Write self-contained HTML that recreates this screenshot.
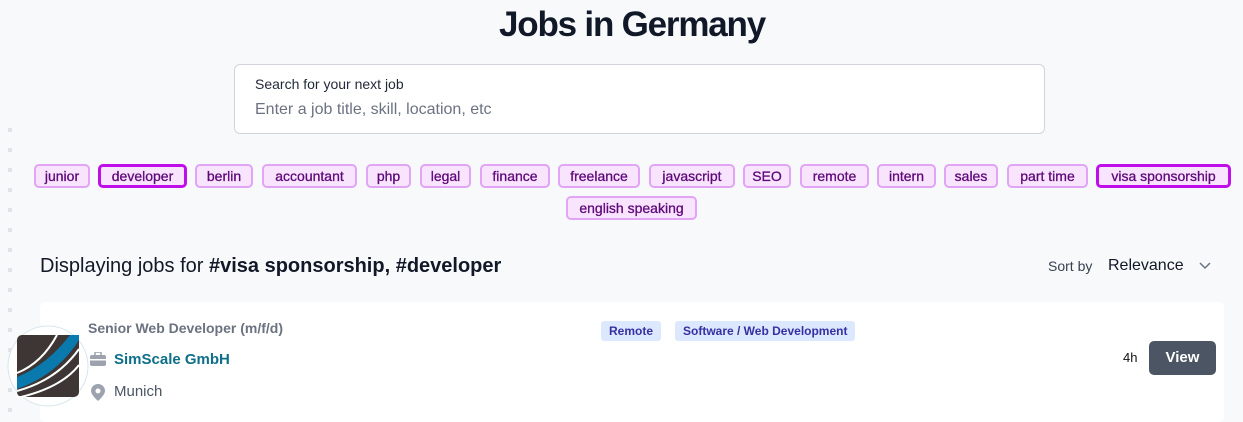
<!DOCTYPE html>
<html><head><meta charset="utf-8"><style>
*{margin:0;padding:0;box-sizing:border-box}
body{width:1243px;height:413px;overflow:hidden;background:#f8f9fb;font-family:"Liberation Sans",Arial,sans-serif;position:relative}
.a{position:absolute}
h1{position:absolute;left:0;width:1264px;top:5px;text-align:center;font-size:35px;font-weight:bold;color:#111827;letter-spacing:-1.2px}
.search{left:234px;top:64px;width:811px;height:70px;background:#fff;border:1px solid #d1d5db;border-radius:6px}
.tag{position:absolute;height:24px;border:2px solid #e2a4f5;background:#f8e4fd;color:#5f087a;border-radius:5px;font-size:14px;text-align:center;line-height:20px;top:164px;-webkit-text-stroke:0.3px #5f087a}
.tag.s{border:3px solid #c00eea;line-height:18px}
.dot{position:absolute;left:8px;width:4px;height:4px;background:#dfe2e6}
.card{left:40px;top:302px;width:1184px;height:120px;background:#fff;border-radius:6px}
.pill{position:absolute;top:321px;height:20px;background:#dbe8fe;color:#3730a3;font-weight:bold;font-size:12px;line-height:20px;border-radius:3px;padding:0 8px}
</style></head><body>
<div class="dot" style="top:128px"></div><div class="dot" style="top:148px"></div><div class="dot" style="top:168px"></div><div class="dot" style="top:188px"></div><div class="dot" style="top:208px"></div><div class="dot" style="top:228px"></div><div class="dot" style="top:248px"></div><div class="dot" style="top:268px"></div><div class="dot" style="top:288px"></div><div class="dot" style="top:308px"></div><div class="dot" style="top:328px"></div><div class="dot" style="top:348px"></div><div class="dot" style="top:368px"></div><div class="dot" style="top:388px"></div><div class="dot" style="top:408px"></div>
<h1>Jobs in Germany</h1>
<div class="a search">
<div class="a" style="left:20px;top:11px;font-size:14px;color:#1f2937">Search for your next job</div>
<div class="a" style="left:20px;top:36px;font-size:16px;color:#6b7280">Enter a job title, skill, location, etc</div>
</div>
<div class="tag" style="left:34px;width:56px">junior</div>
<div class="tag s" style="left:98px;width:89px">developer</div>
<div class="tag" style="left:195px;width:58px">berlin</div>
<div class="tag" style="left:262px;width:95px">accountant</div>
<div class="tag" style="left:366px;width:45px">php</div>
<div class="tag" style="left:420px;width:51px">legal</div>
<div class="tag" style="left:480px;width:70px">finance</div>
<div class="tag" style="left:558px;width:82px">freelance</div>
<div class="tag" style="left:649px;width:86px">javascript</div>
<div class="tag" style="left:743px;width:48px">SEO</div>
<div class="tag" style="left:800px;width:69px">remote</div>
<div class="tag" style="left:877px;width:59px">intern</div>
<div class="tag" style="left:944px;width:54px">sales</div>
<div class="tag" style="left:1007px;width:81px">part time</div>
<div class="tag s" style="left:1096px;width:135px">visa sponsorship</div>
<div class="tag" style="left:566px;width:131px;top:196px">english speaking</div>
<div class="a" style="left:40px;top:255px;font-size:20px;color:#111827">Displaying jobs for <b>#visa sponsorship, #developer</b></div>
<div class="a" style="left:1048px;top:258px;font-size:14px;color:#374151">Sort by</div>
<div class="a" style="left:1108px;top:257px;font-size:16px;color:#111827">Relevance</div>
<svg class="a" style="left:1198px;top:260px" width="14" height="12" viewBox="0 0 14 12"><path d="M2 3l5 5 5-5" fill="none" stroke="#6b7280" stroke-width="1.5"/></svg>
<div class="a card"></div>
<svg class="a" style="left:7px;top:325px" width="82" height="82" viewBox="0 0 82 82"><circle cx="41" cy="41" r="40" fill="#fff" stroke="#d6e6ee"/><rect x="10" y="10" width="62" height="62" rx="5" fill="#3d3634"/><path d="M10 52 Q40 40 63 10 L72 10 L72 15 Q50 50 10 64 Z" fill="#0a79ad"/><path d="M10 66 Q50 55 72 24" fill="none" stroke="#fff" stroke-width="2"/><path d="M10 72 L14 72 Q55 62 72 40" fill="none" stroke="#fff" stroke-width="2"/><path d="M50 10 Q35 38 10 48" fill="none" stroke="#fff" stroke-width="2"/></svg>
<div class="a" style="left:88px;top:320px;font-size:14px;color:#6b7280;font-weight:bold">Senior Web Developer (m/f/d)</div>
<svg class="a" style="left:90px;top:352px" width="16" height="14" viewBox="0 0 16 14"><rect x="0" y="3" width="16" height="11" rx="2" fill="#9ca3af"/><rect x="5" y="0" width="6" height="4" rx="1" fill="none" stroke="#9ca3af" stroke-width="1.5"/><rect x="0" y="7" width="16" height="1.5" fill="#fff"/></svg>
<div class="a" style="left:114px;top:351px;font-size:15px;color:#0e6f8a;font-weight:bold">SimScale GmbH</div>
<svg class="a" style="left:91px;top:384px" width="14" height="17" viewBox="0 0 14 17"><path d="M7 0a7 7 0 0 1 7 7c0 4-7 10-7 10S0 11 0 7a7 7 0 0 1 7-7z" fill="#9ca3af"/><circle cx="7" cy="7" r="2.5" fill="#fff"/></svg>
<div class="a" style="left:114px;top:383px;font-size:15px;color:#4b5563">Munich</div>
<div class="pill" style="left:601px">Remote</div>
<div class="pill" style="left:675px">Software / Web Development</div>
<div class="a" style="left:1123px;top:350px;font-size:13px;color:#111">4h</div>
<div class="a" style="left:1149px;top:341px;width:67px;height:34px;background:#4b5563;border-radius:5px;color:#fff;font-weight:bold;font-size:15px;text-align:center;line-height:34px">View</div>
</body></html>
